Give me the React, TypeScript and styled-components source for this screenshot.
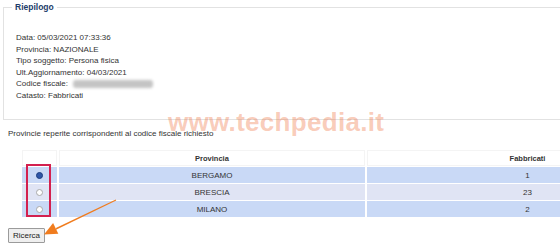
import styled, { createGlobalStyle } from "styled-components";

const GlobalStyle = createGlobalStyle`
    html, body {
        margin: 0;
        padding: 0;
        background: #fff;
    }
    body {
        font-family: "Liberation Sans", Arial, sans-serif;
        color: #333;
    }
`;

const rows = [
    { provincia: "BERGAMO", fabbricati: 1, checked: true },
    { provincia: "BRESCIA", fabbricati: 23, checked: false },
    { provincia: "MILANO", fabbricati: 2, checked: false },
];

const info = [
    "Data: 05/03/2021 07:33:36",
    "Provincia: NAZIONALE",
    "Tipo soggetto: Persona fisica",
    "Ult.Aggiornamento: 04/03/2021",
];

const App = () => {
    return (
        <Page>
            <GlobalStyle />
            <Summary>
                <Legend>Riepilogo</Legend>
                <InfoList>
                    {info.map((line) => (
                        <div key={line}>{line}</div>
                    ))}
                    <div>
                        Codice fiscale:
                        <Blurred />
                    </div>
                    <div>Catasto: Fabbricati</div>
                </InfoList>
            </Summary>

            <Caption>Provincie reperite corrispondenti al codice fiscale richiesto</Caption>

            <TableWrap>
                <ResultTable>
                    <thead>
                        <tr>
                            <HeadCell $width={33}></HeadCell>
                            <HeadCell $width={304}>Provincia</HeadCell>
                            <HeadCell>Fabbricati</HeadCell>
                        </tr>
                    </thead>
                    <tbody>
                        {rows.map((row, i) => (
                            <BodyRow key={row.provincia} $alt={i % 2 === 1}>
                                <td>
                                    <Radio type="radio" name="prov" defaultChecked={row.checked} />
                                </td>
                                <td>{row.provincia}</td>
                                <td>{row.fabbricati}</td>
                            </BodyRow>
                        ))}
                    </tbody>
                </ResultTable>
                <Highlight />
            </TableWrap>

            <SearchButton>Ricerca</SearchButton>

            <Watermark>www.techpedia.it</Watermark>

            <Arrow width="560" height="247" viewBox="0 0 560 247">
                <polygon points="116.2,200.5 115.8,199.6 56.4,227.8 55,230.2" fill="#f07c1e" />
                <polygon points="44,234.5 58.3,233.8 53.1,223" fill="#f07c1e" />
            </Arrow>
        </Page>
    );
};

const Page = styled.div`
    position: relative;
    width: 560px;
    height: 247px;
    overflow: hidden;
    padding: 2px 0 0 3px;
    box-sizing: border-box;
`;

const Summary = styled.fieldset`
    margin: 0;
    width: 700px;
    box-sizing: border-box;
    border: 1px solid #e2e2e2;
    padding: 20px 12px 17px;
`;

const Legend = styled.legend`
    margin-left: -4px;
    padding: 0 3px;
    font-size: 8.5px;
    line-height: 10px;
    font-weight: bold;
    color: #1d3d6b;
`;

const InfoList = styled.div`
    font-size: 8px;
    line-height: 11.6px;
    color: #333;
`;

const Blurred = styled.span`
    display: inline-block;
    vertical-align: middle;
    width: 80px;
    height: 8px;
    margin-left: 5px;
    background: #c4c4c4;
    border-radius: 3px;
    filter: blur(1.5px);
`;

const Caption = styled.div`
    margin: 8px 0 0 5px;
    font-size: 8px;
    line-height: 11.6px;
    color: #333;
`;

const TableWrap = styled.div`
    position: relative;
    margin: 10px 0 0 18px;
    width: 670px;
`;

const ResultTable = styled.table`
    width: 670px;
    border-collapse: separate;
    border-spacing: 2px 1px;
    margin-left: -1px;
    font-size: 8px;
    color: #333;
    table-layout: fixed;

    td {
        height: 16px;
        padding: 0;
        text-align: center;
    }
`;

const HeadCell = styled.th<{ $width?: number }>`
    width: ${(p) => (p.$width ? `${p.$width}px` : "auto")};
    height: 14px;
    padding: 0;
    background: #fff;
    border: 1px solid #f4f4f4;
    font-weight: bold;
    font-size: 7.5px;
    color: #333;
`;

const BodyRow = styled.tr<{ $alt: boolean }>`
    td {
        background: ${(p) => (p.$alt ? "#e0e4f4" : "#c9d9f6")};
    }
`;

const Radio = styled.input`
    appearance: none;
    display: block;
    margin: 0 auto;
    width: 7px;
    height: 7px;
    border-radius: 50%;
    border: 1px solid #a9a9a9;
    background: #fff;
    box-sizing: border-box;

    &:checked {
        border-color: #1c3d7e;
        background: #2e56a8;
    }
`;

const Highlight = styled.div`
    position: absolute;
    left: 5px;
    top: 15px;
    width: 25px;
    height: 53px;
    border: 2px solid #d3204f;
    box-sizing: border-box;
    pointer-events: none;
`;

const SearchButton = styled.button`
    display: block;
    margin: 10px 0 0 5px;
    width: 37px;
    height: 15px;
    padding: 0;
    background: #efefef;
    border: 1px solid #9b9b9b;
    border-radius: 1px;
    font-family: "Liberation Sans", Arial, sans-serif;
    font-size: 8px;
    color: #222;
`;

const Watermark = styled.div`
    position: absolute;
    left: 168px;
    top: 107px;
    font-family: "Liberation Sans", Arial, sans-serif;
    font-weight: bold;
    font-size: 26px;
    line-height: 30px;
    letter-spacing: 0.3px;
    color: rgba(238, 110, 60, 0.36);
    pointer-events: none;
`;

const Arrow = styled.svg`
    position: absolute;
    left: 0;
    top: 0;
    pointer-events: none;
`;

export default App;
